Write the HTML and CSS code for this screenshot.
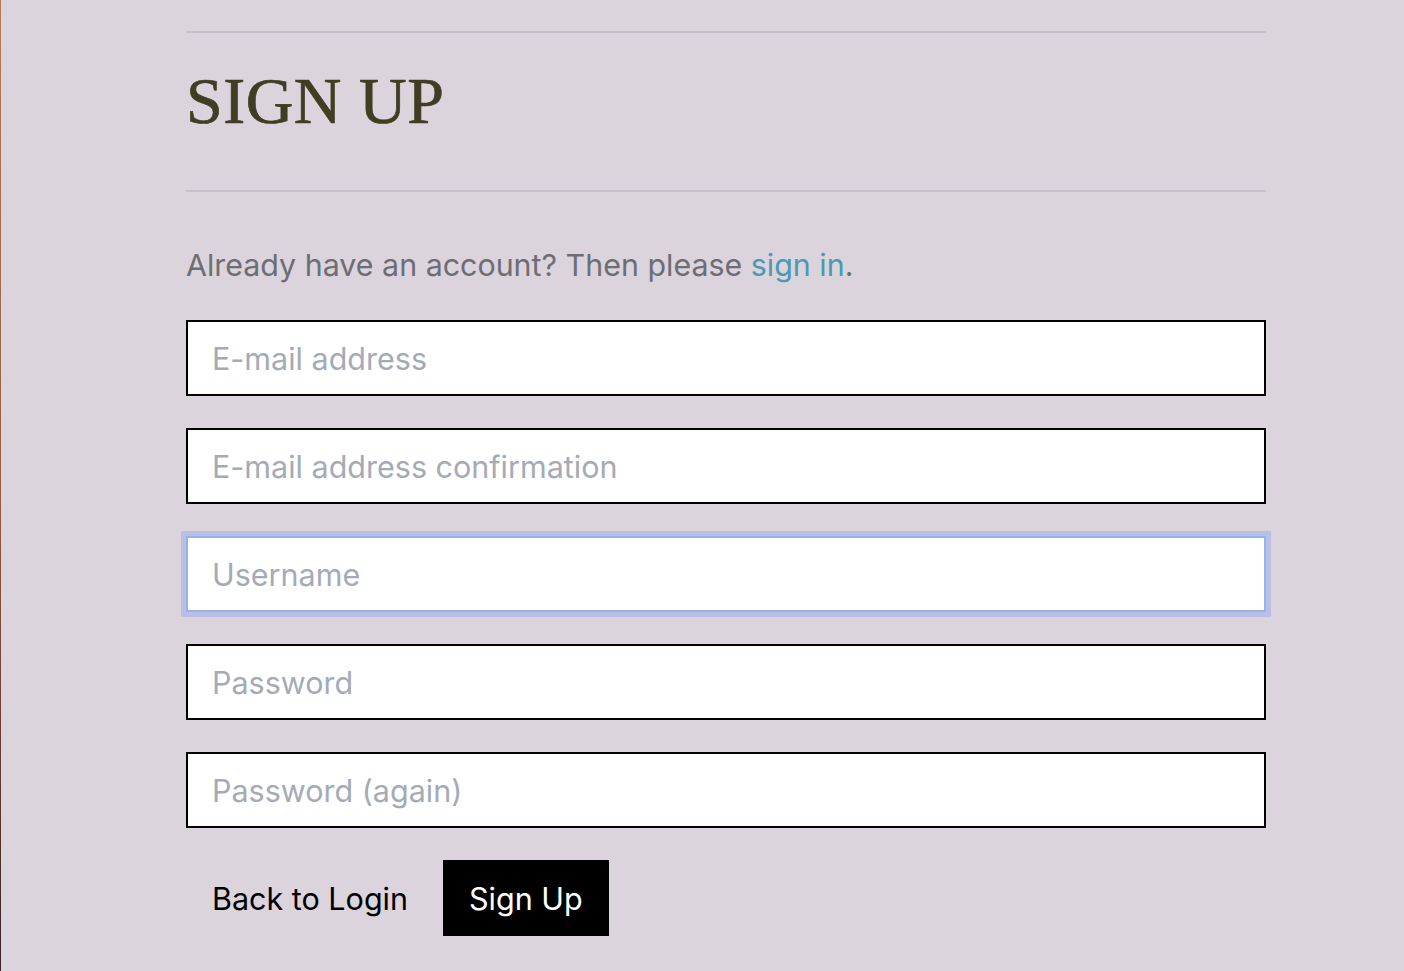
FILE: index.html
```html
<!DOCTYPE html>
<html lang="en">
<head>
<meta charset="utf-8">
<title>Sign Up</title>
<link rel="stylesheet" href="styles.css">
</head>
<body>
<main class="page">
  <hr class="rule">
  <h1 class="title">SIGN UP</h1>
  <hr class="rule">
  <p class="lead">Already have an account? Then please <a href="#" class="link">sign in</a>.</p>
  <form class="form">
    <input class="field" type="email" placeholder="E-mail address">
    <input class="field" type="email" placeholder="E-mail address confirmation">
    <input class="field field-focus" type="text" placeholder="Username">
    <input class="field" type="password" placeholder="Password">
    <input class="field" type="password" placeholder="Password (again)">
    <div class="actions">
      <a href="#" class="btn btn-plain">Back to Login</a>
      <button type="button" class="btn btn-primary">Sign Up</button>
    </div>
  </form>
</main>
</body>
</html>
```
FILE: styles.css
```css
html {
  background: #dcd4dd;
  border-left: 1px solid #a06040;
  border-image: linear-gradient(#b47a52, #9a5a40 50%, #3a2028) 1;
  min-height: 100%;
}
body {
  margin: 0;
  font-family: Inter, "Noto Sans", sans-serif;
}
.page {
  width: 1080px;
  margin-left: 185px;
  padding-top: 31px;
}
.rule {
  border: 0;
  height: 2px;
  background: #c7bfc9;
  margin: 0;
}
.title {
  font-family: "Liberation Serif", "DejaVu Serif", serif;
  font-weight: 400;
  font-size: 66px;
  line-height: 1;
  color: #3f3d22;
  margin: 0;
  padding: 35px 0 56px;
  letter-spacing: 0.5px;
  -webkit-text-stroke: 0.7px #3f3d22;
}
.lead {
  margin: 0;
  padding-top: 55px;
  font-size: 30.4px;
  line-height: 36px;
  color: #6d6e74;
}
.link {
  color: #4b9ab0;
  text-decoration: none;
}
.form {
  display: flex;
  flex-direction: column;
  gap: 32px;
  margin-top: 37px;
}
.field {
  box-sizing: border-box;
  width: 1080px;
  height: 76px;
  border: 2px solid #000;
  background: #fff;
  padding: 0 24px;
  font-family: inherit;
  font-size: 30.5px;
  color: #222;
  outline: none;
  margin: 0;
}
.field::placeholder {
  color: #a4abb6;
}
.field-focus {
  border-color: #94b4ee;
  box-shadow: 0 0 0 5px #b9bfe5;
}
.actions {
  display: flex;
  gap: 9px;
  margin-top: 0;
}
.btn {
  box-sizing: border-box;
  height: 76px;
  padding: 0 26px;
  display: inline-flex;
  align-items: center;
  font-family: inherit;
  font-size: 30.5px;
  text-decoration: none;
  border: 0;
}
.btn-plain {
  color: #000;
  background: transparent;
}
.btn-primary {
  background: #000;
  color: #fff;
}
```
